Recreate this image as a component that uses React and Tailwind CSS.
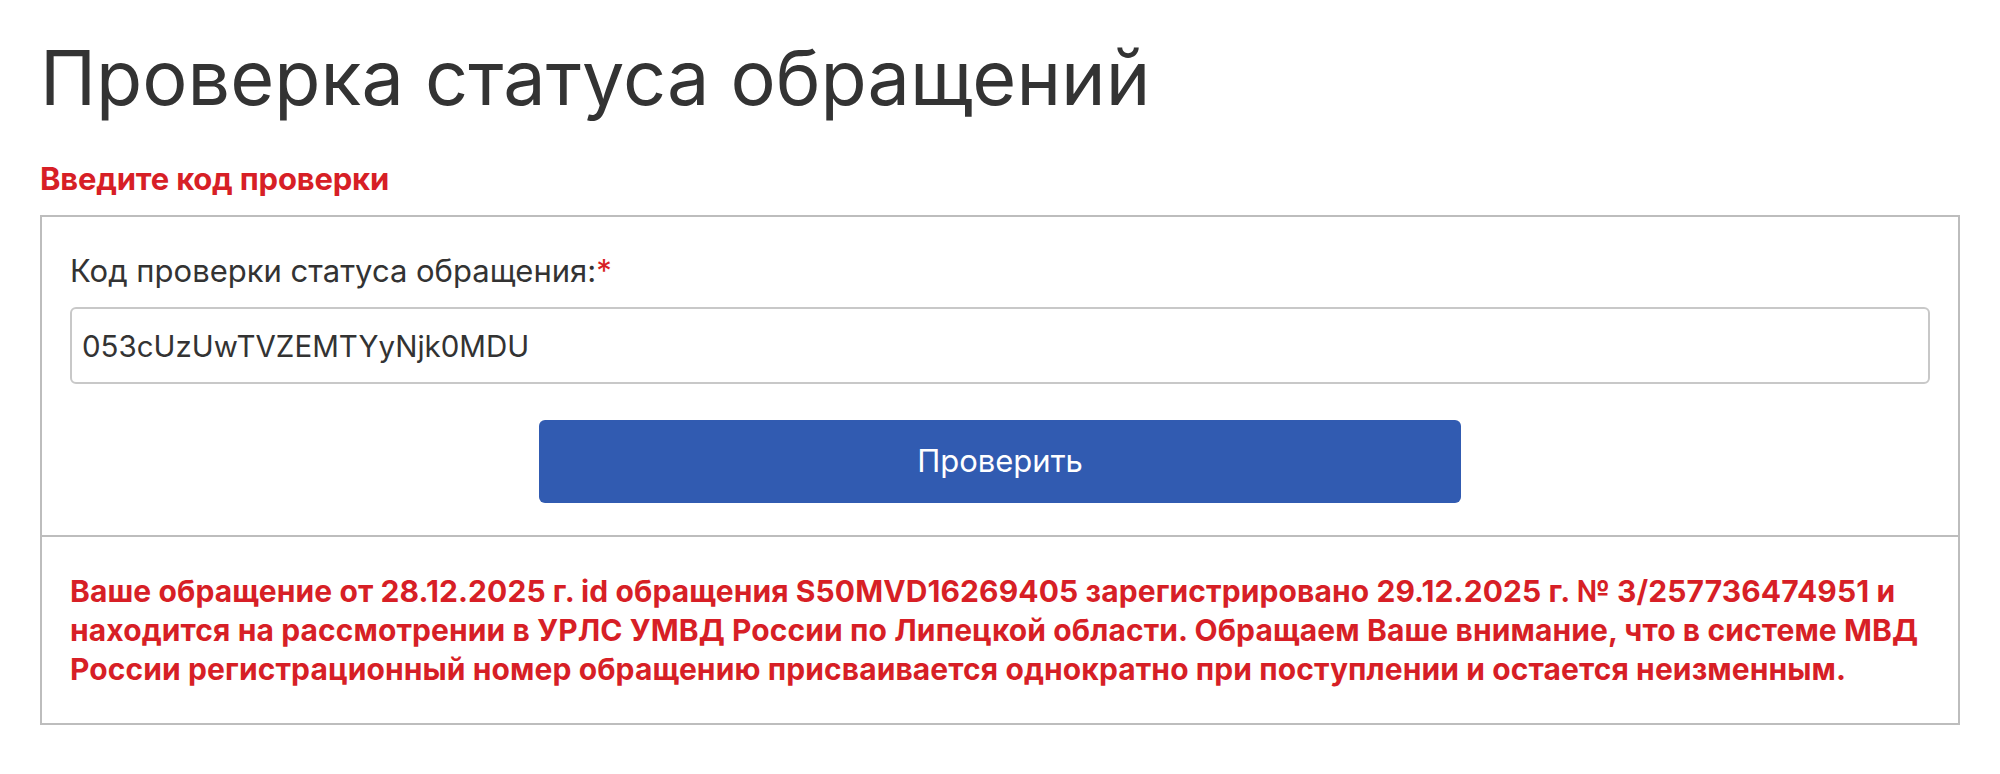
import React from 'react'
import { useState } from 'react'

function App() {
    const [code, setCode] = useState("053cUzUwTVZEMTYyNjk0MDU");

    return (
        <div className="min-h-screen bg-white px-[40px] pt-[34px] font-['Inter',sans-serif] text-[#333]">
            <h1 className="text-[75.5px] leading-[88px] font-normal">Проверка статуса обращений</h1>

            <p className="mt-[42px] text-[31px] leading-[30px] font-bold tracking-[-0.2px] text-[#d71f26]">Введите код проверки</p>

            <div className="mt-[21px] border-2 border-[#bdbdbd]">
                {/* форма ввода кода */}
                <div className="px-[28px] pt-[38px] pb-[32px]">
                    <label className="block text-[31px] leading-[32px]">
                        Код проверки статуса обращения:<span className="text-[#d71f26]">*</span>
                    </label>
                    <input
                        value={code}
                        onChange={(e) => setCode(e.target.value)}
                        className="mt-[20px] block w-full h-[77px] border-2 border-[#c8c8c8] rounded-[6px] pl-[10px] text-[29.5px] text-[#333] outline-none"
                    />
                    <button className="mt-[36px] mx-auto block w-[922px] h-[83px] rounded-[6px] bg-[#315bb1] text-white text-[31px]">
                        Проверить
                    </button>
                </div>

                {/* результат проверки */}
                <div className="border-t-2 border-[#bdbdbd] px-[28px] pt-[35px] pb-[34px]">
                    <p className="text-[30px] leading-[39px] font-bold tracking-[0.1px] text-[#d71f26]">
                        Ваше обращение от 28.12.2025 г. id обращения S50MVD16269405 зарегистрировано 29.12.2025 г. № 3/257736474951 и находится на рассмотрении в УРЛС УМВД России по Липецкой области. Обращаем Ваше внимание, что в системе МВД России регистрационный номер обращению присваивается однократно при поступлении и остается неизменным.
                    </p>
                </div>
            </div>
        </div>
    )
}

export default App
